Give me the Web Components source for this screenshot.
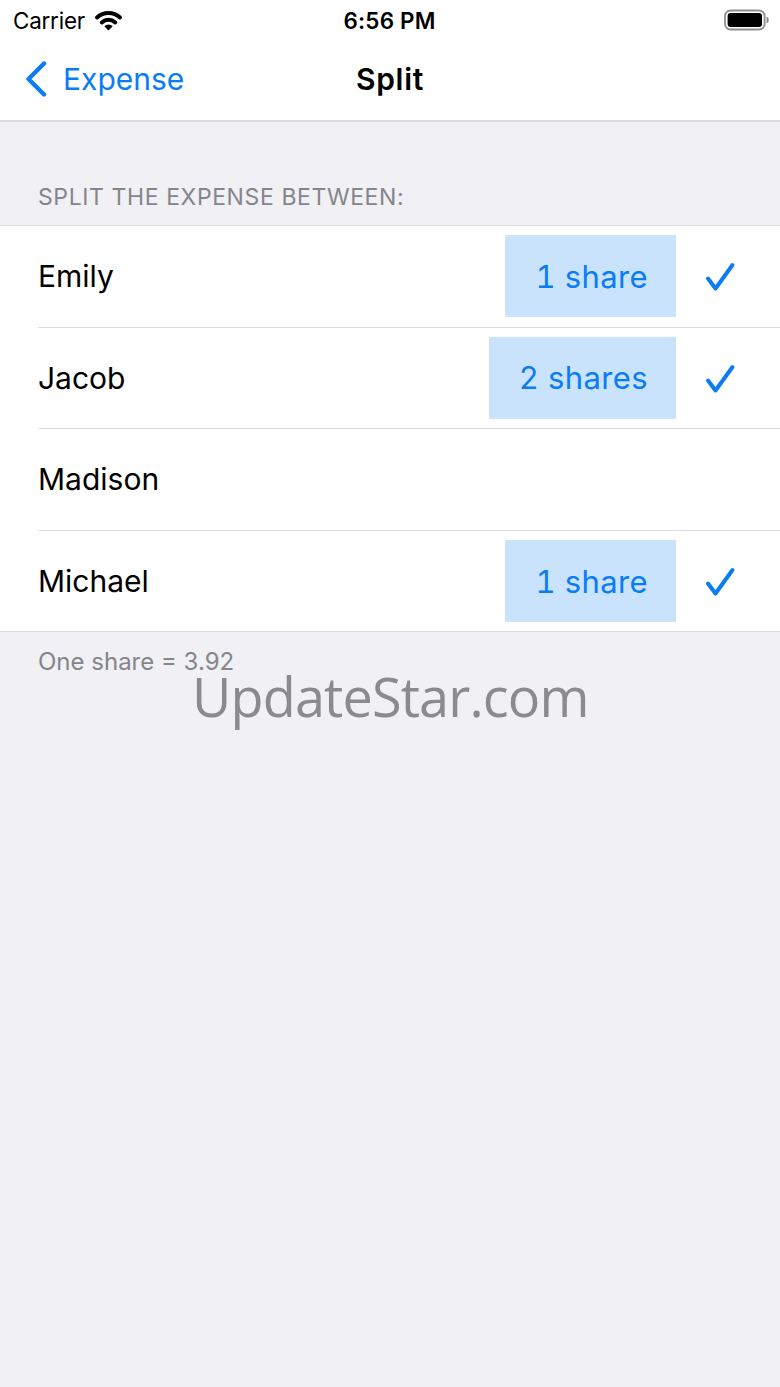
<!DOCTYPE html>
<html>
<head>
<meta charset="utf-8">
<title>Split</title>
<style>
  html, body { margin: 0; height: 100%; }
  body { background: #f0f0f5; font-family: Inter, "Liberation Sans", sans-serif; }
</style>
</head>
<body>
<split-page></split-page>
<script>
class StatusBar extends HTMLElement {
    constructor() {
        super();
        this.attachShadow({ mode: 'open' }).innerHTML = `
            <style>
                :host {
                    display: grid;
                    grid-template-columns: 1fr auto 1fr;
                    align-items: center;
                    height: 40px;
                    padding: 0 10px 0 13px;
                    background: #fff;
                    font-size: 22.4px;
                    color: #000;
                }
                .left { display: flex; align-items: center; gap: 9px; letter-spacing: -0.2px; }
                .time { font-weight: 600; font-size: 22.4px; letter-spacing: 0.2px; position: relative; left: -2px; }
                .right { display: flex; justify-content: flex-end; }
                svg { display: block; }
            </style>
            <div class="left">
                <span>Carrier</span>
                <svg width="29" height="22" viewBox="0 0 29 22">
                    <path d="M3 8.5 A17 17 0 0 1 26 8.5" fill="none" stroke="#000" stroke-width="4" stroke-linecap="round"/>
                    <path d="M7.8 13.4 A10 10 0 0 1 21.2 13.4" fill="none" stroke="#000" stroke-width="4" stroke-linecap="round"/>
                    <path d="M14.5 21.5 L10.3 17.2 A5.8 5.8 0 0 1 18.7 17.2 Z" fill="#000"/>
                </svg>
            </div>
            <div class="time">6:56 PM</div>
            <div class="right">
                <svg width="46" height="22" viewBox="0 0 46 22">
                    <rect x="1" y="1.5" width="39.6" height="19" rx="5.5" fill="none" stroke="#8e8e8e" stroke-width="1.8"/>
                    <rect x="3.6" y="4" width="34.4" height="14" rx="3" fill="#000"/>
                    <path d="M42.5 7.5 C45.5 8.3 45.5 13.7 42.5 14.5 Z" fill="#8e8e8e"/>
                </svg>
            </div>
        `;
    }
}

class NavBar extends HTMLElement {
    constructor() {
        super();
        this.attachShadow({ mode: 'open' }).innerHTML = `
            <style>
                :host {
                    display: grid;
                    grid-template-columns: 1fr auto 1fr;
                    align-items: center;
                    height: 82px;
                    box-sizing: border-box;
                    padding-bottom: 3px;
                    background: #fff;
                    border-bottom: 2px solid #d9d9dc;
                    font-size: 30px;
                }
                .back { display: flex; align-items: center; gap: 16px; padding-left: 25px; color: #0a7cf5; }
                .title { font-weight: 600; color: #000; letter-spacing: 0.7px; }
                svg { display: block; }
            </style>
            <div class="back">
                <svg width="22" height="36" viewBox="0 0 22 36">
                    <path d="M19 2.5 L3.5 18 L19 33.5" fill="none" stroke="#0a7cf5" stroke-width="4.4" stroke-linecap="round" stroke-linejoin="round"/>
                </svg>
                <span>Expense</span>
            </div>
            <div class="title">Split</div>
            <div></div>
        `;
    }
}

class SplitRow extends HTMLElement {
    constructor() {
        super();
        this.attachShadow({ mode: 'open' }).innerHTML = `
            <style>
                :host {
                    display: block;
                    padding-left: 38px;
                    background: #fff;
                }
                .inner {
                    display: flex;
                    align-items: center;
                    height: 101.6px;
                    box-sizing: border-box;
                    padding: 0 44px 0 0;
                    border-bottom: 1.5px solid #dcdcde;
                    font-size: 30px;
                    color: #000;
                }
                :host([last]) { padding-left: 0; }
                :host([last]) .inner { padding-left: 38px; }
                .name { flex: 1; }
                .share {
                    display: none;
                    height: 82px;
                    align-items: center;
                    padding: 0 28px 0 30px;
                    background: #c9e3fd;
                    color: #0a7cf5;
                    font-size: 31px;
                    font-variant-numeric: tabular-nums;
                    letter-spacing: 0.4px;
                }
                .check { display: none; margin-left: 28px; position: relative; top: 1px; }
                :host([shares]) .share { display: flex; }
                :host([shares]) .check { display: block; }
            </style>
            <div class="inner">
                <span class="name"><slot></slot></span>
                <span class="share"></span>
                <svg class="check" width="32" height="30" viewBox="0 0 32 30">
                    <path d="M4 16.5 L11.5 26.5 L28.5 3" fill="none" stroke="#0a7cf5" stroke-width="4" stroke-linecap="round" stroke-linejoin="round"/>
                </svg>
            </div>
        `;
    }

    static get observedAttributes() {
        return ['shares'];
    }

    attributeChangedCallback(name, oldValue, newValue) {
        if (name === 'shares') this.shadowRoot.querySelector('.share').textContent = newValue;
    }
}

class SplitPage extends HTMLElement {
    constructor() {
        super();
        this.attachShadow({ mode: 'open' }).innerHTML = `
            <style>
                :host { display: block; position: relative; }
                .head {
                    padding: 61px 38px 14px;
                    font-size: 23px;
                    line-height: 28px;
                    letter-spacing: 0.6px;
                    color: #85858b;
                }
                .list { border-top: 1.5px solid #dcdcde; }
                .foot {
                    padding: 18px 38px;
                    font-size: 24px;
                    line-height: 24px;
                    color: #85858b;
                }
                .mark {
                    position: absolute;
                    left: 192px;
                    top: 673px;
                    font-size: 54px;
                    line-height: 46px;
                    font-family: "Open Sans", sans-serif;
                    letter-spacing: -0.85px;
                    color: #8a8a8f;
                }
            </style>
            <status-bar></status-bar>
            <nav-bar></nav-bar>
            <div class="head">SPLIT THE EXPENSE BETWEEN:</div>
            <div class="list">
                <split-row shares="1 share">Emily</split-row>
                <split-row shares="2 shares">Jacob</split-row>
                <split-row>Madison</split-row>
                <split-row shares="1 share" last>Michael</split-row>
            </div>
            <div class="foot">One share = 3.92</div>
            <div class="mark">UpdateStar.com</div>
        `;
    }
}

customElements.define('status-bar', StatusBar);
customElements.define('nav-bar', NavBar);
customElements.define('split-row', SplitRow);
customElements.define('split-page', SplitPage);
</script>
</body>
</html>
